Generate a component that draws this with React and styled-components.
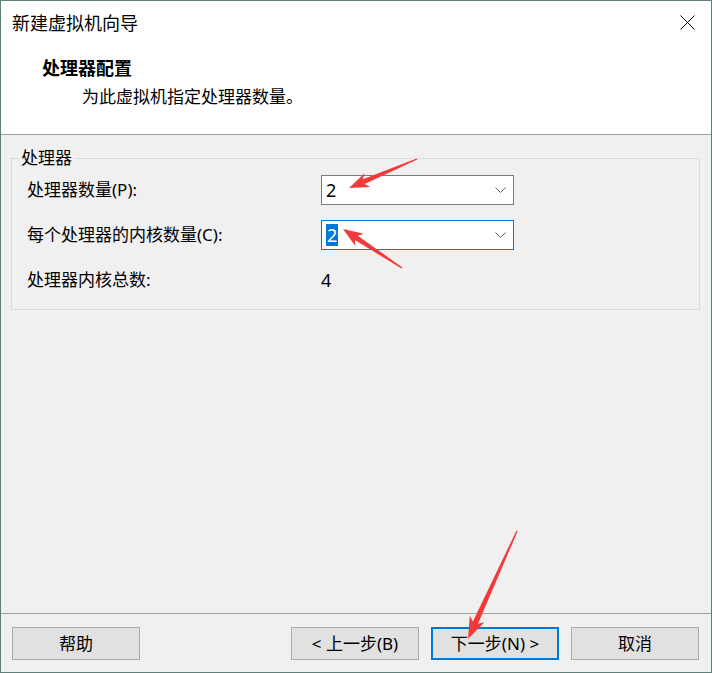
import React from 'react'
import styled, { createGlobalStyle } from 'styled-components'

const GlobalStyle = createGlobalStyle`
  html, body {
    margin: 0;
    padding: 0;
    background: #ffffff;
  }
  body {
    font-family: "Noto Sans", "Noto Sans CJK SC", sans-serif;
    color: #000;
  }
`

// red annotation arrows, tip -> tail in page coordinates
const arrows = [
  { tip: [349, 188], tail: [417, 159], head: 20, hw: 7.5, sw: 2.6 },
  { tip: [343, 229], tail: [402, 268], head: 20, hw: 7.5, sw: 2.6 },
  { tip: [468, 639], tail: [517, 531], head: 22, hw: 8, sw: 2.8 },
]

const arrowPoints = ({ tip, tail, head, hw, sw }) => {
  const dx = tail[0] - tip[0]
  const dy = tail[1] - tip[1]
  const len = Math.hypot(dx, dy)
  const ux = dx / len
  const uy = dy / len
  const vx = -uy
  const vy = ux
  const p = (u, v) => `${(tip[0] + ux * u + vx * v).toFixed(1)},${(tip[1] + uy * u + vy * v).toFixed(1)}`
  return [
    p(0, 0),
    p(head, hw),
    p(head - 4, sw),
    p(len, 0.7),
    p(len, -0.7),
    p(head - 4, -sw),
    p(head, -hw),
  ].join(' ')
}

const App = () => {
  return (
    <>
      <GlobalStyle />
      <Window>
        <Top>
          <TitleBar>
            <span>新建虚拟机向导</span>
            <CloseButton>
              <svg width="15" height="15" viewBox="0 0 15 15">
                <path d="M0.5 0.5 L14.5 14.5 M14.5 0.5 L0.5 14.5" stroke="#000" strokeWidth="1" fill="none" />
              </svg>
            </CloseButton>
          </TitleBar>
          <Header>
            <HeaderTitle>处理器配置</HeaderTitle>
            <HeaderText>为此虚拟机指定处理器数量。</HeaderText>
          </Header>
        </Top>
        <Divider />
        <Body>
          <GroupBox>
            <Legend>处理器</Legend>
            <FormGrid>
              <Label>处理器数量(P):</Label>
              <Combo>
                <Value>2</Value>
                <Chevron />
              </Combo>
              <Label>每个处理器的内核数量(C):</Label>
              <Combo focused>
                <Value><Selected>2</Selected></Value>
                <Chevron />
              </Combo>
              <Label>处理器内核总数:</Label>
              <Total>4</Total>
            </FormGrid>
          </GroupBox>
        </Body>
        <Divider />
        <ButtonBar>
          <Button>帮助</Button>
          <NavButtons>
            <Button>&lt; 上一步(B)</Button>
            <Button primary>下一步(N) &gt;</Button>
            <Button>取消</Button>
          </NavButtons>
        </ButtonBar>
        <Annotations width="712" height="673" viewBox="0 0 712 673">
          {arrows.map((a, i) => (
            <polygon key={i} points={arrowPoints(a)} fill="#f23a3a" />
          ))}
        </Annotations>
      </Window>
    </>
  )
}

const Chevron = () => (
  <svg width="11" height="6" viewBox="0 0 11 6">
    <path d="M0.5 0.5 L5.5 5.5 L10.5 0.5" stroke="#606060" strokeWidth="1" fill="none" />
  </svg>
)

export default App

const Window = styled.div`
position: relative;
width: 712px;
height: 673px;
box-sizing: border-box;
border: 1px solid #5f8079;
background: #f0f0f0;
display: flex;
flex-direction: column;
overflow: hidden;
`

const Top = styled.div`
flex: none;
height: 133px;
background: #ffffff;
`

const TitleBar = styled.div`
height: 43px;
display: flex;
align-items: center;
justify-content: space-between;
padding: 0 16px 0 11px;
font-size: 18px;
line-height: 24px;
`

const CloseButton = styled.div`
display: flex;
width: 15px;
height: 15px;
`

const Header = styled.div`
padding: 12px 0 0 41px;
`

const HeaderTitle = styled.div`
font-size: 18px;
font-weight: 700;
line-height: 24px;
`

const HeaderText = styled.div`
margin-top: 5px;
padding-left: 40px;
font-size: 17px;
line-height: 24px;
`

const Divider = styled.div`
flex: none;
height: 1px;
background: #a0a0a0;
`

const Body = styled.div`
flex: 1;
padding: 14px 11px 0 10px;
`

const GroupBox = styled.fieldset`
margin: 0;
min-width: 0;
border: 1px solid #dcdcdc;
padding: 8px 15px 14px 15px;
`

const Legend = styled.legend`
margin-left: -8px;
padding: 0 2px;
font-size: 17px;
line-height: 18px;
`

const FormGrid = styled.div`
display: grid;
grid-template-columns: 294px 193px;
grid-auto-rows: 30px;
row-gap: 15px;
align-items: center;
`

const Label = styled.div`
font-size: 17px;
line-height: 24px;
`

const Combo = styled.div`
height: 30px;
box-sizing: border-box;
border: 1px solid ${p => (p.focused ? '#0078d7' : '#7a7a7a')};
background: #ffffff;
display: flex;
align-items: center;
justify-content: space-between;
padding: 0 7px 0 4px;
`

const Value = styled.div`
font-size: 18px;
line-height: 22px;
`

const Selected = styled.span`
display: inline-block;
background: #0078d7;
color: #ffffff;
padding: 0 1px;
`

const Total = styled.div`
font-size: 18px;
line-height: 24px;
`

const ButtonBar = styled.div`
flex: none;
height: 58px;
box-sizing: border-box;
display: flex;
align-items: flex-start;
justify-content: space-between;
padding: 13px 12px 0 11px;
`

const NavButtons = styled.div`
display: flex;
gap: 12px;
`

const Button = styled.button`
width: 128px;
height: 33px;
box-sizing: border-box;
margin: 0;
padding: 0;
background: #e1e1e1;
border: ${p => (p.primary ? '2px solid #0078d7' : '1px solid #adadad')};
border-radius: 0;
font-family: inherit;
font-size: 17px;
line-height: 22px;
color: #000;
display: flex;
align-items: center;
justify-content: center;
`

const Annotations = styled.svg`
position: absolute;
top: -1px;
left: -1px;
pointer-events: none;
`
